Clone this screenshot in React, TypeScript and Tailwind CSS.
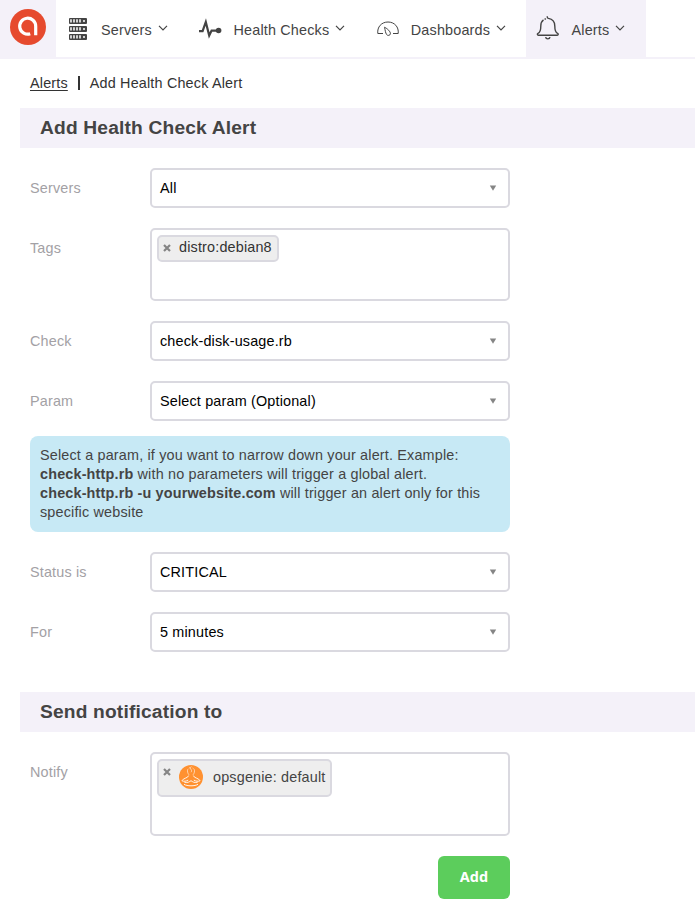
import type { ReactNode } from 'react';

function Chevron() {
  return (
    <svg width="10" height="6" viewBox="0 0 10 6" fill="none" stroke="#444" strokeWidth="1.2" className="mt-[-2px]">
      <path d="M1 .8 5 4.8 9 .8" />
    </svg>
  );
}

function Logo() {
  return (
    <svg width="36" height="36" viewBox="0 0 36 36">
      <circle cx="18" cy="18" r="18" fill="#e64a2e" />
      <path d="M20.2 24.8A8 8 0 1 1 25.7 17.2V26.3" fill="none" stroke="#fff" strokeWidth="3.2" />
    </svg>
  );
}

function ServersIcon() {
  return (
    <svg width="20" height="22" viewBox="0 0 20 22" className="mt-[-1px]">
      {[0, 8, 16].map((y) => (
        <g key={y}>
          <rect x="1" y={y} width="18" height="6" rx="1" fill="#444" />
          <path d={`M3 ${y + 1.2}v3.4M6 ${y + 1.2}v3.4M9 ${y + 1.2}v3.4M12 ${y + 1.2}v3.4`} stroke="#fff" strokeWidth="1.5" />
          <circle cx="16" cy={y + 3} r="1" fill="#fff" />
        </g>
      ))}
    </svg>
  );
}

function PulseIcon() {
  return (
    <svg width="24" height="24" viewBox="0 0 24 24" fill="none" stroke="#444">
      <path d="M0 14.1h3.6L6.8 5l3.4 13.6 2.4-5h6" strokeMiterlimit="8" strokeWidth="2.2" />
      <circle cx="19.6" cy="13.5" r="2.8" fill="#444" stroke="none" />
    </svg>
  );
}

function GaugeIcon() {
  return (
    <svg width="22" height="16" viewBox="0 0 22 16" fill="none" stroke="#444" strokeWidth="1">
      <path d="M6 12.5H.8C0 6 4.5 1 11 1s11 5 10.2 11.5H16" />
      <path d="M7.6 6.2c2.9 1.6 6 4.3 5.8 6.6-.2 1.8-2.8 2.2-3.9.6-1-1.5-1.4-4.3-1.9-7.2Z" />
    </svg>
  );
}

function BellIcon() {
  return (
    <svg width="24" height="26" viewBox="0 0 24 26" fill="none" stroke="#444" strokeWidth="1.4">
      <path d="M11.2 1.2c-.1 1.2.3 2 1.2 2.2 4.2.8 6.4 3.6 6.4 7.5 0 4 .4 6.4 2.8 7.4 1 .5.8 1.9-.4 1.9H2.4c-1.2 0-1.4-1.4-.4-1.9 2.4-1 2.8-3.4 2.8-7.4 0-2.8 1-4.8 2.7-6M8.6 4.3l1.2-.7" />
      <path d="M9.6 22.2c.4 2.2 4 2.2 4.4 0" />
    </svg>
  );
}

function Remove() {
  return (
    <svg width="8" height="8" viewBox="0 0 8 8" stroke="#858585" strokeWidth="2.2" className="shrink-0">
      <path d="M1 1 7 7M7 1 1 7" />
    </svg>
  );
}

function GenieIcon() {
  return (
    <svg width="24" height="24" viewBox="0 0 24 24" fill="none" stroke="#fff" strokeWidth=".9" className="shrink-0">
      <circle cx="12" cy="12" r="12" fill="#ff9130" stroke="none" />
      <path d="M8.8 4.200C8 6 8.800 8.600 10 9.800M15.200 4.200c.8 1.800 0 4.400-1.200 5.600M12.300 1.500c-1.200 1.300-1 2.200-.2 3.100.7.900.6 1.700 0 2.600M9.800 3.300l1.200-.8M13.600 3l1 .7" strokeWidth=".7" opacity=".85" />
      <path d="M9.600 10.600C9.200 13.200 4 13 2.900 15.800c2 .9 4.400.4 6.300-.7M14.400 10.600c.4 2.600 5.600 2.400 6.700 5.200-2 .9-4.400.4-6.300-.7" />
      <path d="M5.400 17.300c3.400.7 5-.5 6.600-1.600 1.600 1.100 3.200 2.300 6.600 1.600M5 19.300c3 2 11 2 14 0" />
    </svg>
  );
}

function NavItem({ icon, label, className }: { icon: ReactNode; label: string; className: string }) {
  return (
    <a className={`flex h-[58px] items-center ${className}`}>
      {icon}
      <span className="mt-[2px] whitespace-nowrap">{label}</span>
      <Chevron />
    </a>
  );
}

function Row({ label, children }: { label: string; children: ReactNode }) {
  return (
    <div className="ml-[30px] flex w-[480px]">
      <div className="h-10 w-[120px] leading-10 text-[#a3a1a5]">{label}</div>
      {children}
    </div>
  );
}

function Select({ value }: { value: string }) {
  return (
    <div className="flex h-10 w-[360px] items-center justify-between rounded-[5px] border-2 border-[#dad9e0] pr-[11px] pl-2 text-black">
      <span>{value}</span>
      <svg width="8" height="6" viewBox="0 0 8 6" fill="#858585">
        <path d="M.8 .5h6.4L4 5.7Z" />
      </svg>
    </div>
  );
}

function Heading({ children }: { children: ReactNode }) {
  return (
    <h2 className="ml-5 h-10 bg-[#f4f1f9] pl-5 text-[19.2px] leading-10 font-bold tracking-[0.17px] text-[#444]">{children}</h2>
  );
}

export default function App() {
  return (
    <div className="h-[902px] w-[695px] overflow-hidden bg-white font-['Liberation_Sans',Arial,sans-serif] text-[14.4px] leading-[20px] tracking-[0.17px] text-[#444]">
      <nav className="flex h-[59px] border-b-2 border-[#f4f1f9]">
        <div className="h-[59px] w-14 bg-[#f4f1f9] pt-[9px] pl-[10px]">
          <Logo />
        </div>
        <NavItem icon={<ServersIcon />} label="Servers" className="w-[143px] gap-[6px] pl-3 [&>span]:ml-[7px]" />
        <NavItem icon={<PulseIcon />} label="Health Checks" className="w-[178px] gap-[6px] [&>span]:ml-[4.5px]" />
        <NavItem icon={<GaugeIcon />} label="Dashboards" className="w-[149px] gap-[6px] [&>span]:ml-[5.8px]" />
        <div className="h-[59px] bg-[#f4f1f9]">
          <NavItem icon={<BellIcon />} label="Alerts" className="w-[120px] gap-[6px] pl-[10px] [&>span]:ml-[5.5px] [&>svg:first-child]:mt-[-2px]" />
        </div>
      </nav>

      <div className="flex h-[49px] items-center pb-[2px] pl-[30px] text-[#333]">
        <a className="underline underline-offset-2">Alerts</a>
        <span className="mx-[10px] h-[14px] w-[2px] bg-[#333]" />
        <span>Add Health Check Alert</span>
      </div>

      <Heading>Add Health Check Alert</Heading>
      <div className="mt-5 flex flex-col gap-5">
        <Row label="Servers"><Select value="All" /></Row>
        <Row label="Tags">
          <div className="h-[73px] w-[360px] rounded-[5px] border-2 border-[#dad9e0] p-[5px]">
            <div className="flex h-[27px] w-[122px] items-center gap-2 rounded-[5px] border-2 border-[#dad9e0] bg-[#eee] pb-[2px] pl-1 whitespace-nowrap text-[#333]">
              <Remove />
              <span className="mt-[-1px]">distro:debian8</span>
            </div>
          </div>
        </Row>
        <Row label="Check"><Select value="check-disk-usage.rb" /></Row>
        <Row label="Param"><Select value="Select param (Optional)" /></Row>
      </div>

      <p className="mt-[15px] ml-[30px] h-24 w-[480px] rounded-[8px] bg-[#c7e9f5] px-[10px] py-[10px] leading-[19px]">
        Select a param, if you want to narrow down your alert. Example:<br />
        <b>check-http.rb</b> with no parameters will trigger a global alert.<br />
        <b>check-http.rb -u yourwebsite.com</b> will trigger an alert only for this specific website
      </p>

      <div className="mt-5 mb-10 flex flex-col gap-5">
        <Row label="Status is"><Select value="CRITICAL" /></Row>
        <Row label="For"><Select value="5 minutes" /></Row>
      </div>

      <Heading>Send notification to</Heading>
      <div className="mt-5">
        <Row label="Notify">
          <div className="h-[84px] w-[360px] rounded-[5px] border-2 border-[#dad9e0] p-[5px]">
            <div className="flex h-[38px] w-[175px] items-center rounded-[5px] border-2 border-[#dad9e0] bg-[#eee] pb-[2px] pl-1 whitespace-nowrap">
              <span className="mr-2 h-[18px]"><Remove /></span>
              <GenieIcon />
              <span className="ml-[10px]">opsgenie: default</span>
            </div>
          </div>
        </Row>
      </div>
      <div className="mt-5 ml-[30px] flex w-[480px] justify-end">
        <button className="h-[43px] w-[72px] rounded-[6px] bg-[#5ccd5c] pb-[2px] font-['Noto_Sans',sans-serif] text-[14.4px] font-bold text-white">Add</button>
      </div>
    </div>
  );
}
